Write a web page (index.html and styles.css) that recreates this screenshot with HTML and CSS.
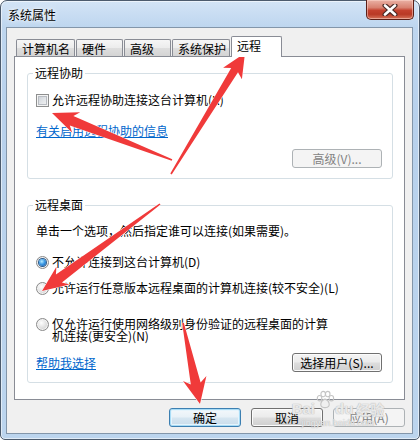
FILE: index.html
```html
<!DOCTYPE html>
<html>
<head>
<meta charset="utf-8">
<title>系统属性</title>
<link rel="stylesheet" href="styles.css">
</head>
<body>
<div class="window">
  <div class="titlebar">
    <span class="title">系统属性</span>
    <div class="close">
      <svg width="20" height="12" viewBox="0 0 20 12">
        <path d="M5 1.5 L15 10.5 M15 1.5 L5 10.5" stroke="#4a2a26" stroke-width="5" stroke-linecap="round"/>
        <path d="M5 1.5 L15 10.5 M15 1.5 L5 10.5" stroke="#ffffff" stroke-width="2.6" stroke-linecap="round"/>
      </svg>
    </div>
  </div>
  <div class="client">
    <div class="tabs">
      <div class="tab w1">计算机名</div>
      <div class="tab w2">硬件</div>
      <div class="tab w3">高级</div>
      <div class="tab w4">系统保护</div>
      <div class="tab sel">远程</div>
    </div>
    <div class="panel">
      <fieldset class="group g1">
        <legend>远程协助</legend>
        <div class="row check-row"><span class="checkbox"></span><span>允许远程协助连接这台计算机(R)</span></div>
        <div class="row link-row"><span class="link">有关启用远程协助的信息</span></div>
        <div class="btn-row end"><span class="btn disabled wide">高级(V)...</span></div>
      </fieldset>
      <fieldset class="group g2">
        <legend>远程桌面</legend>
        <div class="row desc">单击一个选项，然后指定谁可以连接(如果需要)。</div>
        <div class="row radio-row r1"><span class="radio checked"></span><span>不允许连接到这台计算机(D)</span></div>
        <div class="row radio-row r2"><span class="radio"></span><span>允许运行任意版本远程桌面的计算机连接(较不安全)(L)</span></div>
        <div class="row radio-row r3 multi"><span class="radio"></span><span class="wrap">仅允许运行使用网络级别身份验证的远程桌面的计算机连接(更安全)(N)</span></div>
        <div class="btn-row split"><span class="link">帮助我选择</span><span class="btn wide">选择用户(S)...</span></div>
      </fieldset>
    </div>
    <div class="actions">
      <span class="btn default">确定</span>
      <span class="btn">取消</span>
      <span class="btn disabled">应用(A)</span>
    </div>
  </div>
</div>
<div class="watermark">
  <div class="wm-top"><span>Bai</span><svg class="paw" width="20" height="20" viewBox="0 0 22 20"><g fill="none" stroke="#c4c4c4" stroke-width="1.2"><ellipse cx="5" cy="8" rx="2.5" ry="3"/><ellipse cx="9" cy="3.5" rx="2.5" ry="3"/><ellipse cx="14" cy="3.5" rx="2.5" ry="3"/><ellipse cx="18" cy="8" rx="2.5" ry="3"/><path d="M11 9 C6 10 5 17 8.5 18 C10 18.5 12 18.5 13.5 18 C17 17 16 10 11 9 Z"/></g></svg><span>du</span><span class="wm-cn">经验</span></div>
  <div class="wm-bottom">jingyan.baidu.com</div>
</div>
<svg class="arrows" width="420" height="442" viewBox="0 0 420 442">
  <g fill="#f03a3a" stroke="#ffffff" stroke-width="1" stroke-linejoin="round" paint-order="stroke">
    <polygon points="245,53 241.9,79.2 238,72.2 171.7,174.4 170.3,173.6 231.2,68 223.1,67.8"/>
    <polygon points="52,113 80.2,112.3 73.4,116 172.3,159.3 171.7,160.7 69.8,125.4 72.2,132.7"/>
    <polygon points="42,291 56.4,266.7 55.9,274.5 159.5,203.4 160.5,204.6 61.9,282.5 69.4,284.5"/>
    <polygon points="200,404 183,381.1 190.8,384.5 182.2,323.2 183.8,322.8 200.6,382.5 206.4,376.1"/>
  </g>
</svg>
</body>
</html>
```

FILE: styles.css
```css
* { box-sizing: border-box; }

html, body {
  margin: 0;
  padding: 0;
  background: #ffffff;
}

body {
  width: 420px;
  height: 442px;
  position: relative;
  overflow: hidden;
  font-family: "Noto Sans CJK SC", "Noto Sans", sans-serif;
  font-size: 12px;
  color: #000;
}

.window {
  width: 420px;
  height: 440px;
  border: 1px solid #4c5b6d;
  border-radius: 7px 7px 5px 5px;
  padding: 0 6px 5px 5px;
  background: linear-gradient(180deg, #d3e4f6 0, #bed6ef 26px, #b8d1ec 120px, #bcd5ee 100%);
  box-shadow: inset 0 0 0 1px rgba(255,255,255,0.55);
}

.titlebar {
  height: 26px;
  display: flex;
  justify-content: space-between;
  align-items: flex-start;
}

.title {
  padding: 7px 0 0 2px;
  line-height: 14px;
  font-size: 12px;
  color: #000;
  text-shadow: 0 0 6px #fff, 0 0 3px #fff;
}

.close {
  width: 48px;
  height: 20px;
  margin-top: -1px;
  margin-right: -1px;
  border: 1px solid #5b1f17;
  border-top: none;
  border-radius: 0 0 5px 5px;
  background: linear-gradient(180deg, #eab1a5 0, #d88170 40%, #c4412e 55%, #b93925 75%, #d6735a 100%);
  box-shadow: inset 0 0 0 1px rgba(255,220,210,0.5);
  display: flex;
  align-items: center;
  justify-content: center;
}

.client {
  height: 407px;
  border: 1px solid #8396aa;
  background: #f0f0f0;
  padding: 8px 7px 6px 7px;
  display: flex;
  flex-direction: column;
}

/* tabs */
.tabs {
  height: 20px;
  display: flex;
  align-items: flex-end;
  gap: 1px;
  padding-left: 2px;
}

.tab {
  height: 17px;
  border: 1px solid #898c95;
  border-bottom: none;
  border-radius: 2px 2px 0 0;
  padding: 2px 0 0 5px;
  line-height: 14px;
  background: linear-gradient(180deg, #f6f6f6 0, #ececec 50%, #dedede 51%, #d4d4d4 100%);
  white-space: nowrap;
}

.w1 { width: 59px; }
.w2 { width: 47px; }
.w3 { width: 47px; }
.w4 { width: 58px; }

.tab.sel {
  width: 51px;
  height: 21px;
  margin-bottom: -1px;
  padding: 2px 0 4px 5px;
  background: #ffffff;
  position: relative;
  z-index: 1;
}

/* panel */
.panel {
  height: 344px;
  border: 1px solid #898c95;
  background: #ffffff;
  display: flex;
  flex-direction: column;
}

.group {
  margin: 0 11px 0 12px;
  padding: 0 10px 10px 8px;
  border: 1px solid #d5dfe5;
  border-radius: 3px;
  min-width: 0;
  display: flex;
  flex-direction: column;
}

.group legend {
  margin-left: -3px;
  padding: 0 2px;
  line-height: 14px;
  height: 14px;
}

.g1 { margin-top: 9px; }
.g2 { margin-top: 19px; }

.row {
  display: flex;
  align-items: center;
  line-height: 14px;
  height: 14px;
  white-space: nowrap;
}

.check-row { margin-top: 13px; gap: 3px; }
.link-row { margin-top: 17px; }

.link {
  color: #0066cc;
  text-decoration: underline;
  line-height: 14px;
}

.btn-row {
  display: flex;
  align-items: center;
  height: 19px;
}

.g1 .btn-row { margin-top: 11px; }
.g2 .btn-row { margin-top: 11px; }

.end { justify-content: flex-end; }
.split { justify-content: space-between; }

.desc { margin-top: 12px; }
.radio-row { gap: 3px; }
.r1 { margin-top: 17px; }
.r2 { margin-top: 12px; }
.r3 {
  margin-top: 23px;
  height: auto;
  align-items: flex-start;
  line-height: 12px;
  white-space: normal;
}

.wrap {
  max-width: 282px;
  line-height: 12px;
}

/* controls */
.checkbox {
  width: 13px;
  height: 13px;
  flex: none;
  border: 1px solid #8e8f8f;
  background: linear-gradient(135deg, #c6cbd2 0, #e3e6e9 55%, #f6f6f6 100%);
  box-shadow: inset 0 0 0 1px #f4f4f4, inset 0 0 0 2px #b8bcc2;
}

.radio {
  width: 13px;
  height: 13px;
  flex: none;
  border-radius: 50%;
  border: 1px solid #8a8a8a;
  background: radial-gradient(circle at 40% 35%, #ffffff 0, #e4e4e4 45%, #c4c4c4 100%);
  box-shadow: inset 0 0 0 1px #f3f3f3;
  display: flex;
  align-items: center;
  justify-content: center;
}

.radio.checked::after {
  content: "";
  width: 7px;
  height: 7px;
  border-radius: 50%;
  background: radial-gradient(circle at 40% 35%, #b8ecff 0, #3f9ce6 45%, #0d4fa3 100%);
  box-shadow: 0 0 0 1px #2a5a8c;
}

.btn {
  width: 72px;
  height: 19px;
  border: 1px solid #707070;
  border-radius: 3px;
  background: linear-gradient(180deg, #f4f4f4 0, #ebebeb 48%, #dddddd 52%, #cfcfcf 100%);
  box-shadow: inset 0 0 0 1px #fbfbfb;
  display: flex;
  align-items: center;
  justify-content: center;
  line-height: 14px;
  white-space: nowrap;
}

.btn.wide { width: 90px; }

.btn.disabled {
  border-color: #adb2b5;
  background: #f4f4f4;
  color: #838383;
  box-shadow: none;
}

.btn.default {
  border-color: #3c7fb1;
  background: linear-gradient(180deg, #f3f8fb 0, #e8f1f7 48%, #d6e6f1 52%, #c9dcea 100%);
  box-shadow: inset 0 0 0 1px #a8dcf6, inset 0 0 0 2px #e5f4fc;
}

.actions {
  margin-top: 8px;
  height: 19px;
  display: flex;
  justify-content: flex-end;
  gap: 10px;
}

/* overlays */
.arrows {
  position: absolute;
  left: 0;
  top: 0;
  pointer-events: none;
}

.watermark {
  position: absolute;
  left: 288px;
  top: 388px;
  width: 100px;
  height: 46px;
  display: flex;
  flex-direction: column;
  align-items: center;
  color: rgba(255,255,255,0.7);
  text-shadow: 0 0 1px #b8b8b8, 0 0 1px #b8b8b8;
  font-family: "Liberation Sans", "Noto Sans CJK SC", sans-serif;
  pointer-events: none;
}

.wm-top {
  height: 30px;
  display: flex;
  align-items: flex-end;
  font-size: 15px;
  font-weight: bold;
  line-height: 18px;
}

.wm-top span { height: 18px; line-height: 18px; }

.wm-cn {
  margin-left: 3px;
  font-family: "Noto Sans CJK SC", sans-serif;
  font-size: 14px;
}

.paw { margin-bottom: 8px; }

.wm-bottom {
  height: 11px;
  font-size: 9px;
  line-height: 11px;
}
```
